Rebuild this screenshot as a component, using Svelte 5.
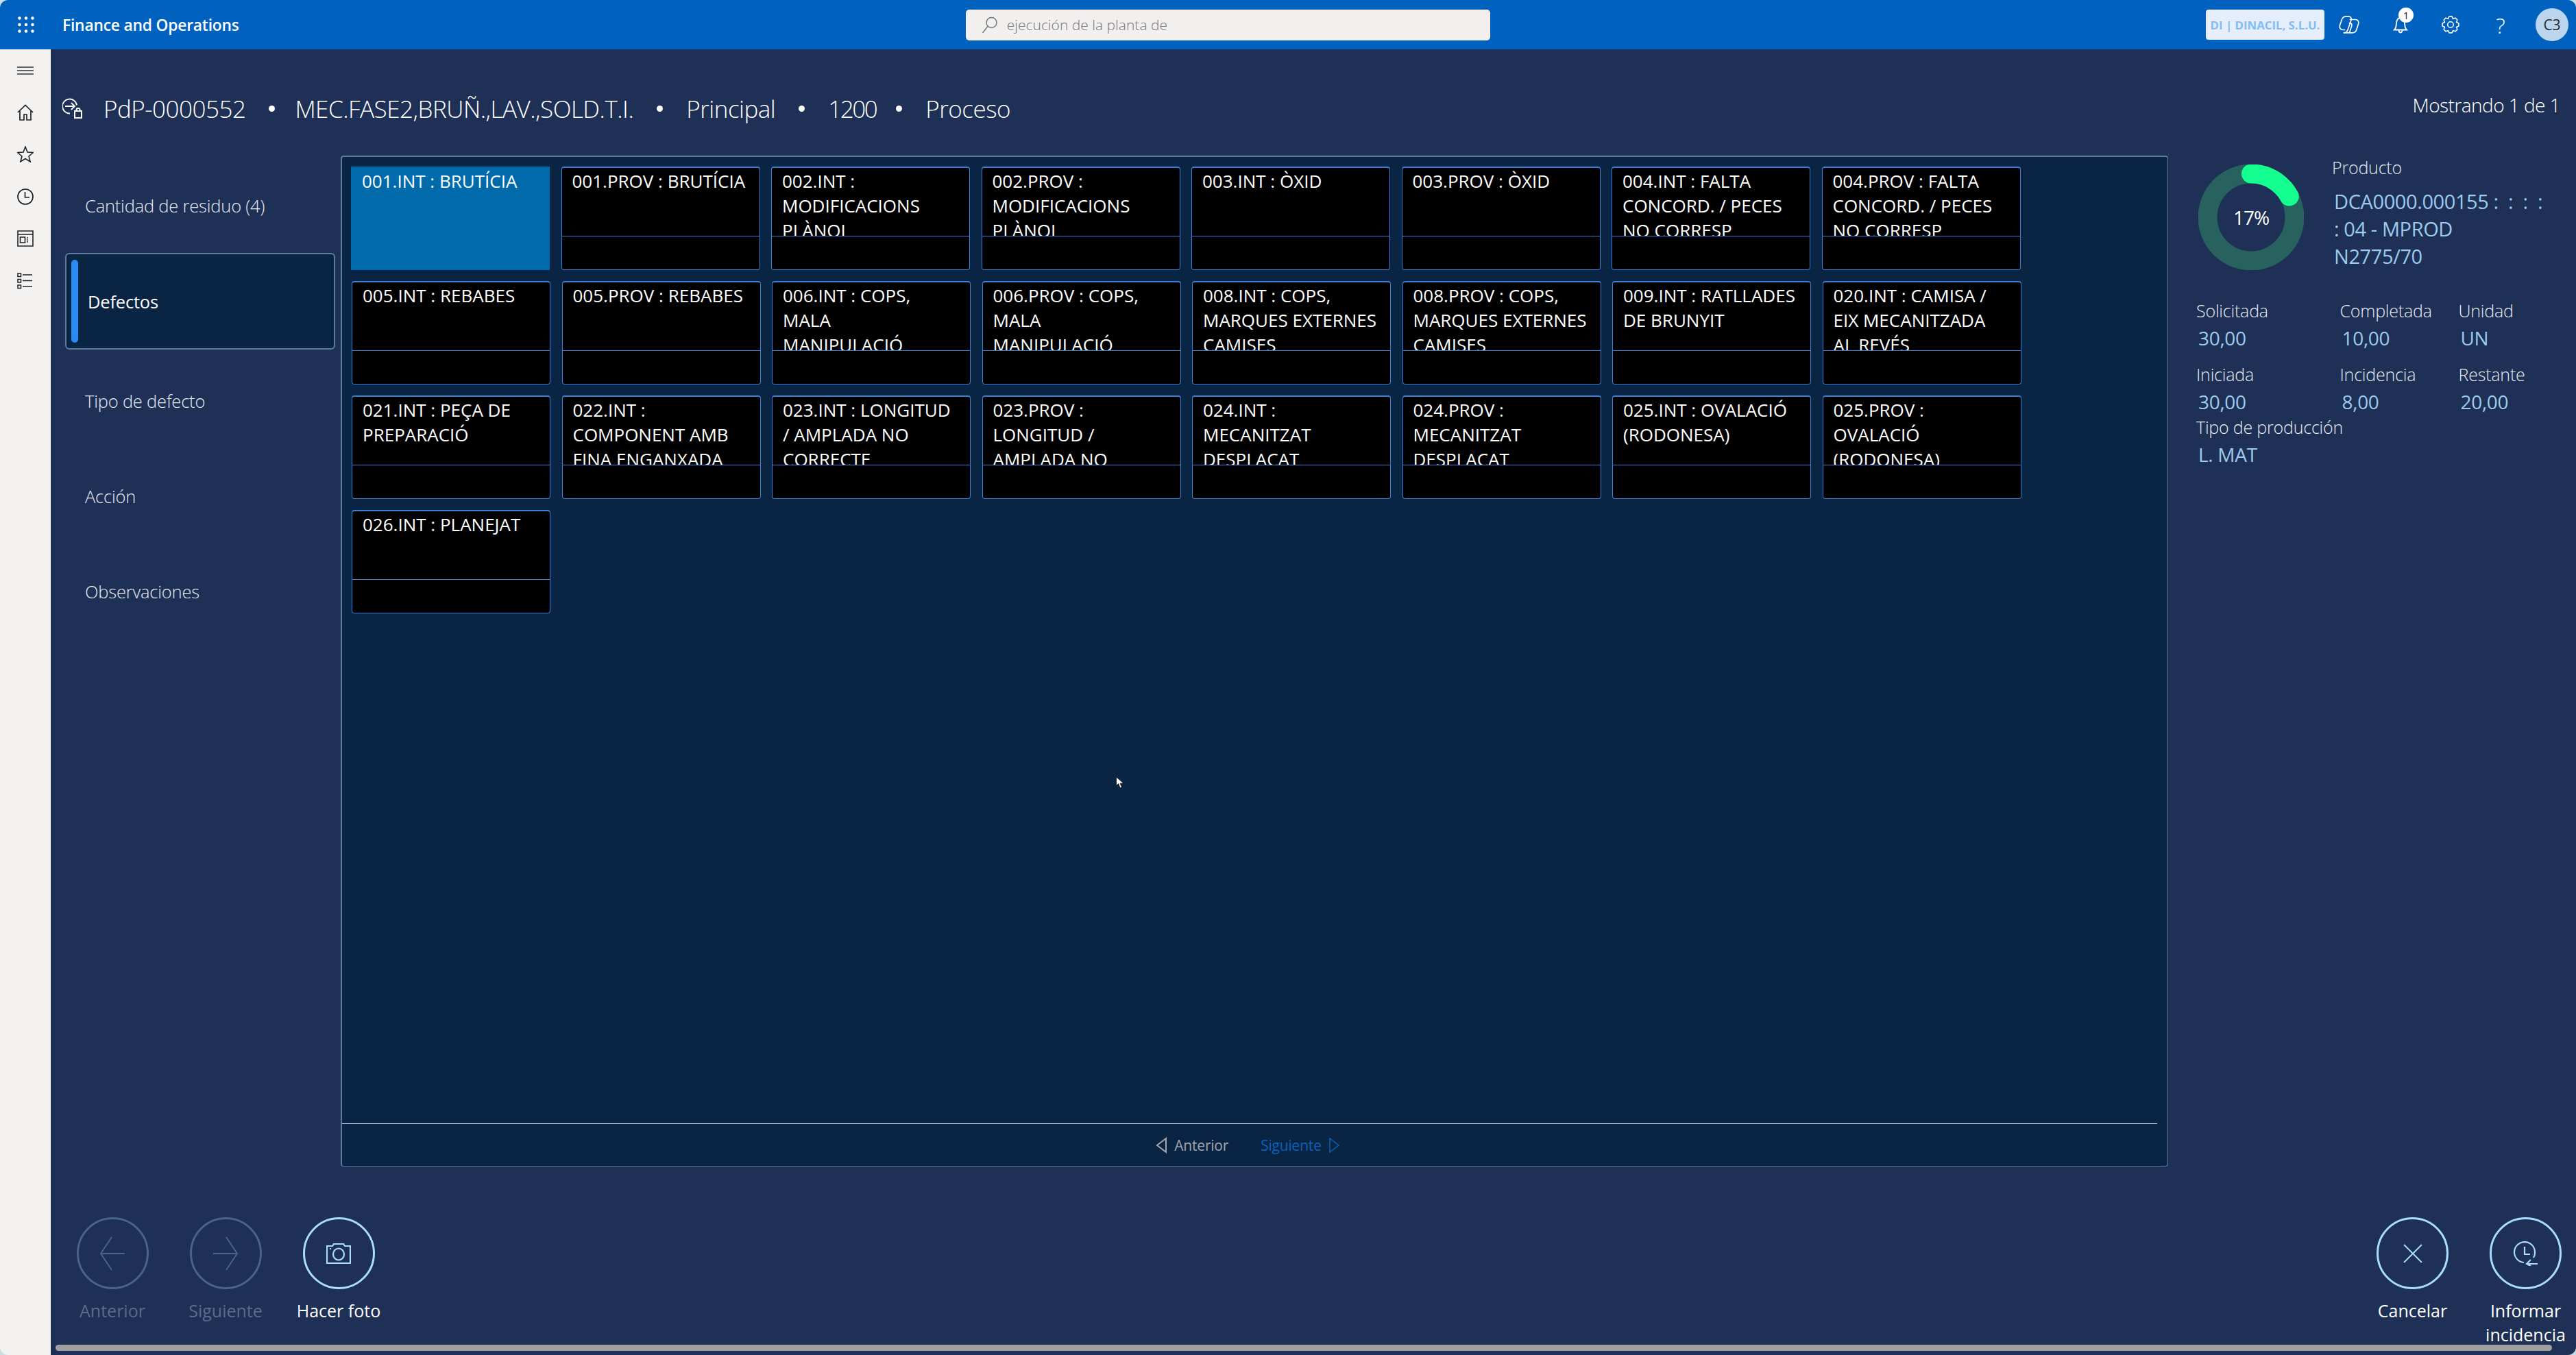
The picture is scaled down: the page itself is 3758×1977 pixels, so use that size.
<script>
  const rows = [
    ["001.INT : BRUTÍCIA", "001.PROV : BRUTÍCIA", "002.INT :\nMODIFICACIONS\nPLÀNOL", "002.PROV :\nMODIFICACIONS\nPLÀNOL", "003.INT : ÒXID", "003.PROV : ÒXID", "004.INT : FALTA\nCONCORD. / PECES\nNO CORRESP", "004.PROV : FALTA\nCONCORD. / PECES\nNO CORRESP"],
    ["005.INT : REBABES", "005.PROV : REBABES", "006.INT : COPS,\nMALA\nMANIPULACIÓ", "006.PROV : COPS,\nMALA\nMANIPULACIÓ", "008.INT : COPS,\nMARQUES EXTERNES\nCAMISES", "008.PROV : COPS,\nMARQUES EXTERNES\nCAMISES", "009.INT : RATLLADES\nDE BRUNYIT", "020.INT : CAMISA /\nEIX MECANITZADA\nAL REVÉS"],
    ["021.INT : PEÇA DE\nPREPARACIÓ", "022.INT :\nCOMPONENT AMB\nFINA ENGANXADA", "023.INT : LONGITUD\n/ AMPLADA NO\nCORRECTE", "023.PROV :\nLONGITUD /\nAMPLADA NO", "024.INT :\nMECANITZAT\nDESPLAÇAT", "024.PROV :\nMECANITZAT\nDESPLAÇAT", "025.INT : OVALACIÓ\n(RODONESA)", "025.PROV :\nOVALACIÓ\n(RODONESA)"],
    ["026.INT : PLANEJAT"],
  ];

  const navItems = ["Cantidad de residuo (4)", "Defectos", "Tipo de defecto", "Acción", "Observaciones"];
  const crumbs = ["MEC.FASE2,BRUÑ.,LAV.,SOLD.T.I.", "Principal", "1200", "Proceso"];

  const stats = [
    { label: "Solicitada", value: "30,00" },
    { label: "Completada", value: "10,00" },
    { label: "Unidad", value: "UN" },
    { label: "Iniciada", value: "30,00" },
    { label: "Incidencia", value: "8,00" },
    { label: "Restante", value: "20,00" },
  ];

  // gear outline for the settings button
  function gearPath(cx, cy, outer, inner, teeth) {
    let d = "";
    const step = (Math.PI * 2) / teeth;
    for (let i = 0; i < teeth; i++) {
      const a = i * step;
      const pts = [
        [inner, a - step * 0.5],
        [outer, a - step * 0.22],
        [outer, a + step * 0.22],
      ];
      for (const [r, t] of pts) {
        d += (d ? "L" : "M") + (cx + r * Math.cos(t)).toFixed(2) + " " + (cy + r * Math.sin(t)).toFixed(2);
      }
    }
    return d + "Z";
  }

  const r = 63.5;
  const circ = 2 * Math.PI * r;
  const progress = 0.17;
</script>

<div class="window">
  <header class="topbar">
    <svg class="waffle" viewBox="0 0 24 24" width="24" height="24" fill="#fff">
      {#each [2.5, 12, 21.5] as y}
        {#each [2.5, 12, 21.5] as x}
          <circle cx={x} cy={y} r="2.3" />
        {/each}
      {/each}
    </svg>
    <span class="app-name">Finance and Operations</span>
    <div class="search">
      <svg viewBox="0 0 24 24" width="24" height="26" fill="none" stroke="#777" stroke-width="1.5">
        <circle cx="14.5" cy="9" r="7.5" />
        <path d="M9 14.5 1.5 24" />
      </svg>
      <span>ejecución de la planta de</span>
    </div>
    <div class="tools">
      <button class="company">DI | DINACIL, S.L.U.</button>
      <svg class="tool copilot" viewBox="0 0 30 26" width="30" height="26" fill="none" stroke="#fff" stroke-width="1.7" stroke-linecap="round">
        <path d="M8.500 20.500H6C2 20.500.4 17 1.600 13.500L4.400 5.500C5.300 3 7 1.200 10 1.200h4.500c3 0 4.300 2.600 3.400 5.300l-4.600 13.500c-.9 2.800-2.800 4.800-5.800 4.800" />
        <path d="M16.500 5.500H24c4 0 5.600 3 4.500 6.500l-2.600 8c-.9 3-2.700 4.800-5.900 4.800H7.500" />
        <path d="M15.500 10.500c2.500 0 4.200 1.500 3.200 4.500l-3 9" />
      </svg>
      <div class="bell">
        <svg viewBox="0 0 24 28" width="24" height="28" fill="none" stroke="#fff" stroke-width="1.8">
          <path d="M3 21.500c2-2 2.800-4 2.800-8C5.800 8 8 4 12 4s6.200 4 6.200 9.500c0 4 .8 6 2.800 8Z" />
          <path d="M9.500 22c0 2 1 3.500 2.500 3.500s2.500-1.500 2.500-3.500" />
        </svg>
        <span class="badge">1</span>
      </div>
      <svg class="gear" viewBox="0 0 28 28" width="26" height="26" fill="none" stroke="#fff" stroke-width="1.7">
        <path d={gearPath(14, 14, 13, 10, 8)} stroke-linejoin="round" />
        <circle cx="14" cy="14" r="4.600" />
      </svg>
      <span class="help">?</span>
      <span class="avatar">C3</span>
    </div>
  </header>

  <div class="body">
    <nav class="rail">
      <svg viewBox="0 0 24 12" width="24" height="12" stroke="#333" stroke-width="1.400">
        <path d="M0 1h24M0 6h24M0 11h24" />
      </svg>
      <svg viewBox="0 0 24 24" width="24" height="24" fill="none" stroke="#222" stroke-width="1.700">
        <path d="M1 12 12 1.500 23 12M4 10v13h6v-8h4v8h6V10" />
      </svg>
      <svg viewBox="0 0 24 24" width="24" height="24" fill="none" stroke="#222" stroke-width="1.600">
        <path d="m12 1 3 8 8.500.5-6.500 5.500 2.200 8L12 18.500 4.800 23 7 15 .5 9.500 9 9Z" />
      </svg>
      <svg viewBox="0 0 24 24" width="24" height="24" fill="none" stroke="#222" stroke-width="1.700">
        <circle cx="12" cy="12" r="11" />
        <path d="M11.500 5v8H18" />
      </svg>
      <svg viewBox="0 0 24 24" width="24" height="24" fill="none" stroke="#222" stroke-width="1.600">
        <path d="M1 1h22v22H1ZM1 6h22M4.500 10h7v8h-7ZM14 11h2M14 14h2M14 17h2" />
      </svg>
      <svg viewBox="0 0 24 24" width="24" height="24" fill="none" stroke="#222" stroke-width="1.500">
        <path d="M1 1h4.500v4.500H1ZM1 9.500h4.500V14H1ZM1 18h4.500v4.500H1ZM8 3h14M8 11.500h14M8 20h14" />
      </svg>
    </nav>

    <main class="main">
      <div class="titlebar">
        <svg class="title-icon" viewBox="0 0 30 30" width="30" height="30" fill="none" stroke="#fff" stroke-width="1.800">
          <path d="M21 10.500A10.500 10.500 0 1 0 11 22.500" />
          <path d="M4 12h14M13 7l5 5-5 5" />
          <path d="M18 19h10v10H18ZM20.500 19v-2c0-2.700 5-2.700 5 0v2" stroke-width="2" />
        </svg>
        <span class="order">PdP-0000552</span>
        {#each crumbs as crumb}
          <span class="dot"></span>
          <span>{crumb}</span>
        {/each}
        <span class="showing">Mostrando 1 de 1</span>
      </div>

      <div class="content">
        <ul class="steps">
          {#each navItems as item, i}
            <li class:active={i === 1}>{item}</li>
          {/each}
        </ul>

        <section class="panel">
          <div class="tiles">
            {#each rows as row, ri}
              <div class="tile-row" class:first={ri === 0}>
                {#each row as title, ti}
                  <button class="tile" class:selected={ri === 0 && ti === 0}>
                    <span class="tile-title">{title}</span>
                    <span class="tile-foot"></span>
                  </button>
                {/each}
              </div>
            {/each}
          </div>
          <div class="pager">
            <span class="page prev">
              <svg viewBox="0 0 16 24" width="16" height="24" fill="none" stroke="currentColor" stroke-width="2"><path d="M15 2v20L2 12Z" /></svg>
              Anterior
            </span>
            <span class="page next">
              Siguiente
              <svg viewBox="0 0 16 24" width="16" height="24" fill="none" stroke="currentColor" stroke-width="1.500"><path d="M1 2v20l13-10Z" /></svg>
            </span>
          </div>
        </section>

        <aside class="info">
          <div class="product">
            <svg class="donut" viewBox="0 0 154 154" width="154" height="154">
              <circle cx="77" cy="77" {r} fill="none" stroke="#28625f" stroke-width="28" />
              <circle cx="77" cy="77" {r} fill="none" stroke="#14ff8f" stroke-width="28" stroke-linecap="round"
                stroke-dasharray="{circ * progress} {circ}" transform="rotate(-90 77 77)" />
              <text x="77" y="88" text-anchor="middle" class="pct">17%</text>
            </svg>
            <div class="product-text">
              <div class="label">Producto</div>
              <div class="product-value">DCA0000.000155 :  :  :  :<br />: 04 - MPROD<br />N2775/70</div>
            </div>
          </div>
          <div class="stats">
            {#each stats as stat}
              <div class="stat">
                <div class="label">{stat.label}</div>
                <div class="value">{stat.value}</div>
              </div>
            {/each}
          </div>
          <div class="prod-type">
            <div class="label">Tipo de producción</div>
            <div class="value">L. MAT</div>
          </div>
        </aside>
      </div>

      <footer class="actions">
        <div class="action disabled">
          <span class="circle">
            <svg viewBox="0 0 36 50" width="36" height="50" fill="none" stroke="currentColor" stroke-width="2"><path d="M36 25H1M17 1 1 25l16 24" /></svg>
          </span>
          <span class="caption">Anterior</span>
        </div>
        <div class="action disabled">
          <span class="circle">
            <svg viewBox="0 0 36 50" width="36" height="50" fill="none" stroke="currentColor" stroke-width="2"><path d="M0 25h35M19 1l16 24-16 24" /></svg>
          </span>
          <span class="caption">Siguiente</span>
        </div>
        <div class="action">
          <span class="circle">
            <svg viewBox="0 0 36 30" width="36" height="30" fill="none" stroke="currentColor" stroke-width="2.200">
              <path d="M1 4h8l2-3h14l2 3h8v25H1Z" />
              <ellipse cx="18" cy="16" rx="8" ry="8.500" />
              <path d="M5 8h2" />
            </svg>
          </span>
          <span class="caption">Hacer foto</span>
        </div>
        <div class="spacer"></div>
        <div class="action">
          <span class="circle">
            <svg viewBox="0 0 28 28" width="28" height="28" fill="none" stroke="currentColor" stroke-width="2"><path d="m1 1 26 26M27 1 1 27" /></svg>
          </span>
          <span class="caption">Cancelar</span>
        </div>
        <div class="action last">
          <span class="circle">
            <svg viewBox="0 0 36 36" width="36" height="36" fill="none" stroke="currentColor" stroke-width="2.200">
              <path d="M15 31A15 15 0 1 1 31 17c0 3-.5 5-2 7" />
              <path d="M16 8v11h8M35 33H20M25 27l-6 6 6 3" />
            </svg>
          </span>
          <span class="caption">Informar incidencia</span>
        </div>
      </footer>

      <div class="scrollbar"></div>
    </main>
  </div>

  <svg class="cursor" viewBox="0 0 12 17" width="12" height="17">
    <path d="M.5.5v13l3.200-3 2.300 6 2.500-1-2.400-5.500h4.900Z" fill="#fff" stroke="#0a0a0a" stroke-width=".8" />
  </svg>
</div>

<style>
  :global(body) {
    margin: 0;
    background: #c9dfe8;
  }

  .window {
    position: relative;
    width: 3758px;
    height: 1977px;
    overflow: hidden;
    border-radius: 12px;
    display: flex;
    flex-direction: column;
    font-family: "Open Sans", "Noto Sans", sans-serif;
    color: #fff;
  }

  button {
    font: inherit;
    color: inherit;
    border: none;
    padding: 0;
  }

  .topbar {
    height: 72px;
    flex: none;
    display: flex;
    align-items: center;
    background: #0061bf;
    padding-left: 26px;
    position: relative;
  }

  .app-name {
    margin-left: 41px;
    font-size: 22.8px;
    font-weight: 600;
    letter-spacing: -0.2px;
  }

  .search {
    margin-left: 1060px;
    width: 765px;
    height: 45px;
    box-sizing: border-box;
    background: #f1f0ef;
    border-radius: 5px;
    display: flex;
    align-items: center;
    gap: 13px;
    padding-left: 23px;
    color: #77737a;
    font-size: 21px;
    font-weight: 300;
  }

  .tools {
    position: absolute;
    right: 11px;
    top: 12px;
    height: 48px;
    display: flex;
    align-items: center;
  }

  .company {
    width: 173px;
    height: 44px;
    border-radius: 4px;
    background: #e5eefa;
    color: #82bdf5;
    font-size: 16.8px;
    font-weight: 700;
    white-space: nowrap;
  }

  .copilot {
    margin-left: 21px;
  }

  .bell {
    position: relative;
    margin-left: 48px;
    height: 28px;
  }

  .badge {
    position: absolute;
    left: 9px;
    top: -11px;
    width: 22px;
    height: 22px;
    border-radius: 50%;
    background: #fff;
    color: #222;
    font-size: 15px;
    line-height: 22px;
    text-align: center;
  }

  .gear {
    margin-left: 48px;
  }

  .help {
    margin-left: 49px;
    width: 22px;
    font-size: 32px;
    font-weight: 300;
    text-align: center;
  }

  .avatar {
    margin-left: 40px;
    width: 48px;
    height: 48px;
    border-radius: 50%;
    background: #bcd5ee;
    color: #2a2a2a;
    font-size: 21px;
    line-height: 48px;
    text-align: center;
  }

  .body {
    flex: 1;
    display: flex;
    min-height: 0;
  }

  .rail {
    width: 74px;
    flex: none;
    box-sizing: border-box;
    background: #f3f2f1;
    border-right: 1px solid #fff;
    display: flex;
    flex-direction: column;
    align-items: center;
    gap: 37.600px;
    padding-top: 25px;
  }

  .rail svg:first-child {
    margin-bottom: 5px;
  }

  .main {
    flex: 1;
    min-width: 0;
    position: relative;
    background: #1f3056;
    display: flex;
    flex-direction: column;
  }

  .titlebar {
    height: 155px;
    flex: none;
    box-sizing: border-box;
    display: flex;
    align-items: center;
    gap: 34px;
    padding: 17px 23px 0 17px;
    font-size: 35px;
    font-weight: 300;
    letter-spacing: -0.5px;
    white-space: nowrap;
  }

  .title-icon {
    margin-right: -4px;
  }

  .dot {
    width: 9px;
    height: 9px;
    border-radius: 50%;
    background: #fff;
  }

  .dot:nth-child(3) {
    margin-right: -5px;
  }

  .titlebar > span:nth-child(8) {
    letter-spacing: -2.5px;
  }

  .dot:nth-child(9) {
    margin-left: -5px;
  }

  .showing {
    margin-left: auto;
    font-size: 28px;
    letter-spacing: -0.55px;
    margin-top: -10px;
  }

  .content {
    height: 1475px;
    flex: none;
    display: flex;
  }

  .steps {
    width: 423px;
    flex: none;
    box-sizing: border-box;
    list-style: none;
    margin: 0;
    padding: 3px 8px 0 21px;
    font-size: 25.500px;
    font-weight: 300;
    letter-spacing: -0.2px;
    color: #e6ebf2;
  }

  .steps li {
    height: 139px;
    display: flex;
    align-items: center;
    padding-left: 29px;
  }

  .steps li.active {
    position: relative;
    height: 141px;
    margin-bottom: 5px;
    box-sizing: border-box;
    padding-left: 31px;
    background: #0a2444;
    border: 2px solid #5d7c9f;
    border-radius: 6px;
    font-weight: 400;
    color: #fff;
  }

  .steps li.active::before {
    content: "";
    position: absolute;
    left: 7px;
    top: 8px;
    bottom: 8px;
    width: 10px;
    border-radius: 5px;
    background: #2a8cf0;
  }

  .panel {
    width: 2666px;
    flex: none;
    box-sizing: border-box;
    background: #0a2444;
    border: 2px solid #5d7c9f;
    border-right-width: 1px;
    border-bottom-width: 1px;
    border-radius: 4px;
    display: flex;
    flex-direction: column;
  }

  .tiles {
    flex: 1;
    padding: 14px 0 0 14px;
    display: flex;
    flex-direction: column;
    gap: 16px;
  }

  .tile-row {
    display: flex;
    gap: 16.500px;
  }

  .tile-row.first {
    margin-left: -1px;
  }

  .tile {
    width: 290px;
    height: 151px;
    box-sizing: border-box;
    background: #000;
    border: 1px solid #3b7fd6;
    border-top-width: 2px;
    border-radius: 4px;
    display: flex;
    flex-direction: column;
    text-align: left;
  }

  .tile-title {
    width: 100%;
    height: 100px;
    flex: none;
    box-sizing: border-box;
    overflow: hidden;
    padding: 1px 0 0 15px;
    border-bottom: 1px solid #3b7fd6;
    font-size: 26px;
    line-height: 36px;
    font-weight: 400;
    white-space: pre-line;
  }

  .tile.selected {
    background: #006aaa;
    border-color: #006aaa;
    border-radius: 0;
  }

  .tile.selected .tile-title {
    border-bottom-color: #006aaa;
  }

  .pager {
    height: 61px;
    flex: none;
    margin-right: 15px;
    border-top: 1px solid #d5dce6;
    display: flex;
    justify-content: center;
    align-items: center;
    gap: 47px;
    font-size: 21px;
    letter-spacing: -0.2px;
    padding-right: 5px;
  }

  .page {
    display: flex;
    align-items: center;
    gap: 11px;
  }

  .prev {
    color: #a3a6aa;
  }

  .next {
    color: #0a62bb;
  }

  .info {
    flex: 1;
    min-width: 0;
    padding: 13px 0 0 41px;
    font-size: 25px;
    font-weight: 300;
  }

  .product {
    display: flex;
    gap: 41px;
  }

  .donut {
    margin-left: 3px;
    flex: none;
  }

  .pct {
    font-size: 28px;
    font-weight: 400;
    fill: #fff;
    letter-spacing: -1px;
    font-family: "Open Sans", sans-serif;
  }

  .label {
    color: #e6ebf2;
    line-height: 36px;
    letter-spacing: -0.2px;
  }

  .product-text {
    margin-top: -14px;
  }

  .product-value {
    margin: 12px 0 0 3px;
    font-size: 29px;
    font-weight: 400;
    line-height: 40px;
    letter-spacing: -0.4px;
    color: #9ccbee;
    white-space: pre-wrap;
  }

  .stats {
    display: grid;
    grid-template-columns: 209.500px 173px auto;
    row-gap: 16px;
    margin-top: 41px;
  }

  .value {
    margin: 4px 0 0 3px;
    font-size: 28px;
    font-weight: 400;
    letter-spacing: -0.3px;
    line-height: 37px;
    color: #9ccbee;
  }

  .action {
    width: 165px;
    flex: none;
    display: flex;
    flex-direction: column;
    align-items: center;
    font-size: 25px;
    line-height: 35px;
    color: #fff;
    text-align: center;
  }

  .action:nth-child(1) {
    margin-left: 7.500px;
  }

  .action.last {
    margin-right: -9px;
  }

  .actions {
    flex: 1;
    display: flex;
    padding: 74px 0 0 0;
    min-height: 0;
  }

  .circle {
    width: 105px;
    height: 105px;
    flex: none;
    box-sizing: border-box;
    border: 3px solid #a9dcff;
    border-radius: 50%;
    color: #a9dcff;
    display: flex;
    align-items: center;
    justify-content: center;
    margin-bottom: 14px;
  }

  .action.disabled .circle {
    border-color: #4a6388;
    color: #4a6388;
  }

  .action.disabled .caption {
    color: #5a6b8a;
  }

  .spacer {
    flex: 1;
  }

  .scrollbar {
    position: absolute;
    left: 7px;
    right: 35px;
    bottom: 6px;
    height: 9px;
    border-radius: 5px;
    background: #a0a0a0;
  }

  .cursor {
    position: absolute;
    left: 1628px;
    top: 1133px;
  }
</style>
